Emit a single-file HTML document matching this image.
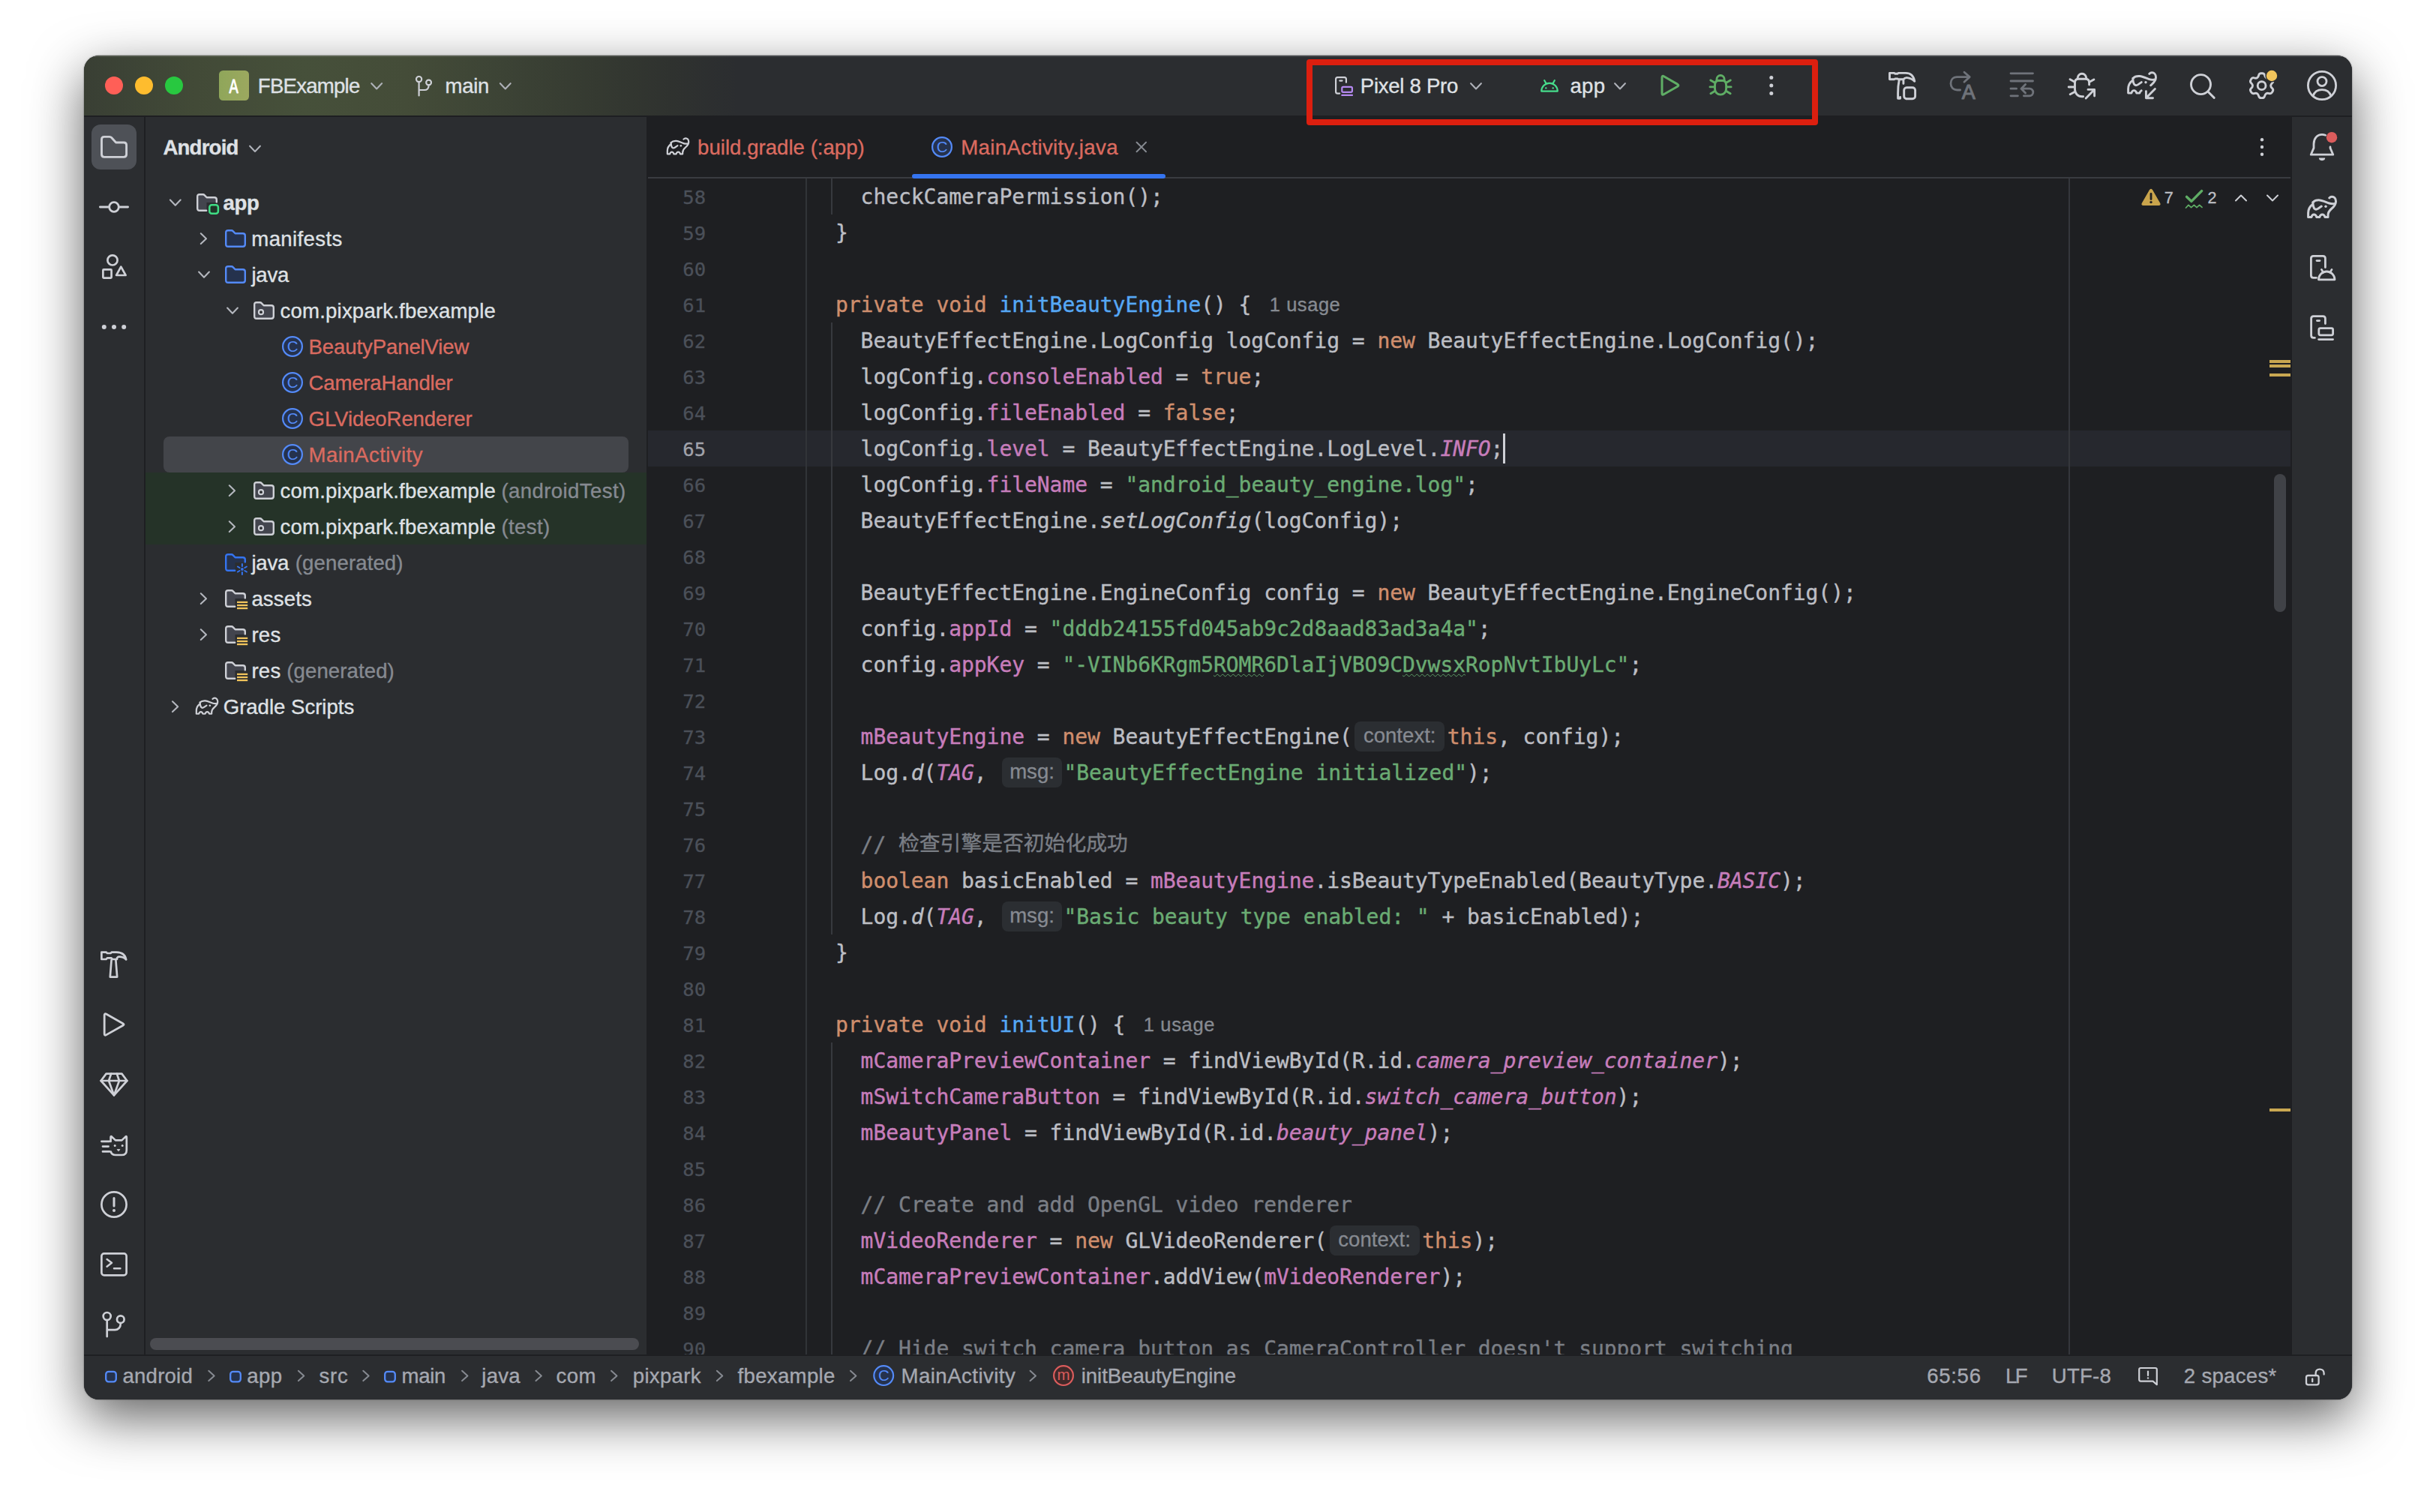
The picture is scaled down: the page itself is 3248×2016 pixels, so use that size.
<!DOCTYPE html>
<html lang="en"><head><meta charset="utf-8"><title>FBExample – MainActivity.java</title>
<style>
*{box-sizing:border-box}
html,body{margin:0;padding:0;background:#fff}
body{width:3248px;height:2016px;position:relative;overflow:hidden;font-family:'Liberation Sans', sans-serif}
.win{position:absolute;left:112px;top:74px;width:3024px;height:1792px;border-radius:20px;overflow:hidden;background:#2b2d30;
 box-shadow:0 24px 70px rgba(0,0,0,.62),0 0 2px rgba(0,0,0,.5)}
.pg{position:absolute;left:-112px;top:-74px;width:3248px;height:2016px}
.a{position:absolute}
.t{position:absolute;white-space:pre;-webkit-text-stroke:0.35px currentColor}
.title{left:112px;top:74px;width:3024px;height:80px;background:linear-gradient(to right,#393f34 0px,#3e4536 80px,#424a37 150px,#46503a 295px,#444c38 430px,#3c4335 560px,#353a31 680px,#2f322f 780px,#2b2d30 870px)}
.cl{position:absolute;left:1080.4px;height:48px;line-height:48px;white-space:pre;color:#bcbec4;font-family:'DejaVu Sans Mono', 'Liberation Mono', 'Noto Sans CJK SC', monospace;font-size:28px;letter-spacing:-0.058px;padding-top:1px;-webkit-text-stroke:0.4px currentColor}
.ln{position:absolute;left:880px;width:61px;text-align:right;height:48px;line-height:48px;color:#4b5059;font-family:'DejaVu Sans Mono', 'Liberation Mono', 'Noto Sans CJK SC', monospace;font-size:25.6px;letter-spacing:-0.05px;padding-top:1px;-webkit-text-stroke:0.3px currentColor}
.ln.cur{color:#a1a3ab}
.k{color:#cf8e6d}.f{color:#56a8f5}.p{color:#c77dbb}.s{color:#6aab73}.c{color:#7a7e85}.i{font-style:italic}
.cjk{font-family:'Liberation Mono','Noto Sans CJK SC',monospace;font-size:27.8px;letter-spacing:0;position:relative;top:-2.5px}
.w{text-decoration:underline wavy #5c9c66;text-decoration-thickness:1.4px;text-underline-offset:2px}
.hw{display:inline-block;position:relative;height:48px;vertical-align:top}
.hb{position:absolute;top:3px;height:40px;border-radius:8px;background:#2b2e32;color:#868a91;font-family:'Liberation Sans', sans-serif;font-size:27.6px;line-height:37.4px;text-align:center;letter-spacing:0;font-style:normal;-webkit-text-stroke:0.3px currentColor}
</style></head>
<body>
<div class="win"><div class="pg">
<div class="a title"></div>
<div class="a" style="left:112px;top:74px;width:3024px;height:1.5px;background:rgba(255,255,255,.1)"></div>
<!-- left stripe / project panel / right stripe backgrounds are window bg -->
<div class="a" style="left:112px;top:154px;width:3024px;height:2px;background:#1e1f22"></div>
<div class="a" style="left:192px;top:154px;width:2px;height:1652px;background:#1e1f22"></div>
<div class="a" style="left:122px;top:166px;width:60px;height:60px;border-radius:12px;background:#4e5157"></div>
<!-- tree backgrounds -->
<div class="a" style="left:194px;top:630px;width:668px;height:96px;background:#253328"></div>
<div class="a" style="left:218px;top:582px;width:620px;height:48px;border-radius:8px;background:#43454a"></div>
<div class="a" style="left:200px;top:1784px;width:652px;height:16px;border-radius:8px;background:#4b4c51"></div>
<!-- editor -->
<div class="a" style="left:862px;top:154px;width:2194px;height:1652px;background:#1e1f22"></div>
<div class="a" style="left:864px;top:574px;width:2190px;height:48px;background:#26282e"></div>
<div class="a" style="left:864px;top:236px;width:2190px;height:2px;background:#393b40"></div>
<div class="a" style="left:1216px;top:232px;width:338px;height:6px;border-radius:3px;background:#3574f0"></div>
<div class="a" style="left:1074.2px;top:238px;width:1.5px;height:1568px;background:#313438"></div>
<div class="a" style="left:2758px;top:238px;width:1.5px;height:1568px;background:#35373c"></div>
<div class="a" style="left:1108.3px;top:238px;width:1.5px;height:48px;background:#37393e"></div>
<div class="a" style="left:1108.3px;top:430px;width:1.5px;height:816px;background:#37393e"></div>
<div class="a" style="left:1108.3px;top:1390px;width:1.5px;height:416px;background:#37393e"></div>
<div class="a" style="left:3032px;top:632px;width:16px;height:184px;border-radius:8px;background:#404247"></div>
<div class="a" style="left:3026px;top:480px;width:28px;height:4px;background:#c9a751"></div>
<div class="a" style="left:3026px;top:486px;width:28px;height:4px;background:#c9a751"></div>
<div class="a" style="left:3026px;top:498px;width:28px;height:4px;background:#c9a751"></div>
<div class="a" style="left:3026px;top:1478px;width:28px;height:4px;background:#c9a751"></div>
<div class="a" style="left:2004px;top:578px;width:2.5px;height:40px;background:#ced0d6"></div>
<div class="a" id="code" style="left:0;top:0;width:3054px;height:1806px;overflow:hidden">
<div class="ln" style="top:238px">58</div><div class="ln" style="top:286px">59</div><div class="ln" style="top:334px">60</div><div class="ln" style="top:382px">61</div><div class="ln" style="top:430px">62</div><div class="ln" style="top:478px">63</div><div class="ln" style="top:526px">64</div><div class="ln cur" style="top:574px">65</div><div class="ln" style="top:622px">66</div><div class="ln" style="top:670px">67</div><div class="ln" style="top:718px">68</div><div class="ln" style="top:766px">69</div><div class="ln" style="top:814px">70</div><div class="ln" style="top:862px">71</div><div class="ln" style="top:910px">72</div><div class="ln" style="top:958px">73</div><div class="ln" style="top:1006px">74</div><div class="ln" style="top:1054px">75</div><div class="ln" style="top:1102px">76</div><div class="ln" style="top:1150px">77</div><div class="ln" style="top:1198px">78</div><div class="ln" style="top:1246px">79</div><div class="ln" style="top:1294px">80</div><div class="ln" style="top:1342px">81</div><div class="ln" style="top:1390px">82</div><div class="ln" style="top:1438px">83</div><div class="ln" style="top:1486px">84</div><div class="ln" style="top:1534px">85</div><div class="ln" style="top:1582px">86</div><div class="ln" style="top:1630px">87</div><div class="ln" style="top:1678px">88</div><div class="ln" style="top:1726px">89</div><div class="ln" style="top:1774px">90</div>
<div class="cl" style="top:238px">    checkCameraPermission();</div><div class="cl" style="top:286px">  }</div><div class="cl" style="top:334px"></div><div class="cl" style="top:382px">  <span class="k">private void</span> <span class="f">initBeautyEngine</span>() {</div><div class="cl" style="top:430px">    BeautyEffectEngine.LogConfig logConfig = <span class="k">new</span> BeautyEffectEngine.LogConfig();</div><div class="cl" style="top:478px">    logConfig.<span class="p">consoleEnabled</span> = <span class="k">true</span>;</div><div class="cl" style="top:526px">    logConfig.<span class="p">fileEnabled</span> = <span class="k">false</span>;</div><div class="cl" style="top:574px">    logConfig.<span class="p">level</span> = BeautyEffectEngine.LogLevel.<span class="p i">INFO</span>;</div><div class="cl" style="top:622px">    logConfig.<span class="p">fileName</span> = <span class="s">"android_beauty_engine.log"</span>;</div><div class="cl" style="top:670px">    BeautyEffectEngine.<span class="i">setLogConfig</span>(logConfig);</div><div class="cl" style="top:718px"></div><div class="cl" style="top:766px">    BeautyEffectEngine.EngineConfig config = <span class="k">new</span> BeautyEffectEngine.EngineConfig();</div><div class="cl" style="top:814px">    config.<span class="p">appId</span> = <span class="s">"dddb24155fd045ab9c2d8aad83ad3a4a"</span>;</div><div class="cl" style="top:862px">    config.<span class="p">appKey</span> = <span class="s">"-VINb6KRgm5<span class="w">ROMR</span>6DlaIjVBO9C<span class="w">Dvwsx</span>RopNvtIbUyLc"</span>;</div><div class="cl" style="top:910px"></div><div class="cl" style="top:958px">    <span class="p">mBeautyEngine</span> = <span class="k">new</span> BeautyEffectEngine(<span class="hw" style="width:127px"><span class="hb" style="left:3.4px;width:120px">context:</span></span><span class="k">this</span>, config);</div><div class="cl" style="top:1006px">    Log.<span class="i">d</span>(<span class="p i">TAG</span>, <span class="hw" style="width:86px"><span class="hb" style="left:3.6px;width:80px">msg:</span></span><span class="s">"BeautyEffectEngine initialized"</span>);</div><div class="cl" style="top:1054px"></div><div class="cl" style="top:1102px">    <span class="c">// </span><span class="c cjk">检查引擎是否初始化成功</span></div><div class="cl" style="top:1150px">    <span class="k">boolean</span> basicEnabled = <span class="p">mBeautyEngine</span>.isBeautyTypeEnabled(BeautyType.<span class="p i">BASIC</span>);</div><div class="cl" style="top:1198px">    Log.<span class="i">d</span>(<span class="p i">TAG</span>, <span class="hw" style="width:86px"><span class="hb" style="left:3.6px;width:80px">msg:</span></span><span class="s">"Basic beauty type enabled: "</span> + basicEnabled);</div><div class="cl" style="top:1246px">  }</div><div class="cl" style="top:1294px"></div><div class="cl" style="top:1342px">  <span class="k">private void</span> <span class="f">initUI</span>() {</div><div class="cl" style="top:1390px">    <span class="p">mCameraPreviewContainer</span> = findViewById(R.id.<span class="p i">camera_preview_container</span>);</div><div class="cl" style="top:1438px">    <span class="p">mSwitchCameraButton</span> = findViewById(R.id.<span class="p i">switch_camera_button</span>);</div><div class="cl" style="top:1486px">    <span class="p">mBeautyPanel</span> = findViewById(R.id.<span class="p i">beauty_panel</span>);</div><div class="cl" style="top:1534px"></div><div class="cl" style="top:1582px">    <span class="c">// Create and add OpenGL video renderer</span></div><div class="cl" style="top:1630px">    <span class="p">mVideoRenderer</span> = <span class="k">new</span> GLVideoRenderer(<span class="hw" style="width:127px"><span class="hb" style="left:3.4px;width:120px">context:</span></span><span class="k">this</span>);</div><div class="cl" style="top:1678px">    <span class="p">mCameraPreviewContainer</span>.addView(<span class="p">mVideoRenderer</span>);</div><div class="cl" style="top:1726px"></div><div class="cl" style="top:1774px">    <span class="c">// Hide switch camera button as CameraController doesn't support switching</span></div>
</div>
<!-- status bar -->
<div class="a" style="left:112px;top:1806px;width:3024px;height:60px;background:#2b2d30"></div>
<div class="a" style="left:112px;top:1806px;width:3024px;height:2px;background:#1e1f22"></div>
<div class="t" style="left:343.8px;top:97.9px;font-size:27.6px;line-height:33px;color:#dfe1e5;font-weight:normal;font-style:normal;letter-spacing:-0.766px">FBExample</div><div class="t" style="left:593.6px;top:97.9px;font-size:27.6px;line-height:33px;color:#dfe1e5;font-weight:normal;font-style:normal;letter-spacing:-0.371px">main</div><div class="t" style="left:1813.8px;top:97.9px;font-size:27.6px;line-height:33px;color:#dfe1e5;font-weight:normal;font-style:normal;letter-spacing:-0.294px">Pixel 8 Pro</div><div class="t" style="left:2093.5px;top:97.9px;font-size:27.6px;line-height:33px;color:#dfe1e5;font-weight:normal;font-style:normal;letter-spacing:0.277px">app</div><div class="t" style="left:217.4px;top:179.9px;font-size:27.6px;line-height:33px;color:#dfe1e5;font-weight:bold;font-style:normal;letter-spacing:-0.794px">Android</div><div class="t" style="left:297.5px;top:253.9px;font-size:27.6px;line-height:33px;color:#dfe1e5;font-weight:bold;font-style:normal;letter-spacing:-0.381px">app</div><div class="t" style="left:335.3px;top:301.9px;font-size:27.6px;line-height:33px;color:#dfe1e5;font-weight:normal;font-style:normal;letter-spacing:0.363px">manifests</div><div class="t" style="left:335.4px;top:349.9px;font-size:27.6px;line-height:33px;color:#dfe1e5;font-weight:normal;font-style:normal;letter-spacing:-0.208px">java</div><div class="t" style="left:373.6px;top:397.9px;font-size:27.6px;line-height:33px;color:#dfe1e5;font-weight:normal;font-style:normal;letter-spacing:0.173px">com.pixpark.fbexample</div><div class="t" style="left:411.6px;top:445.9px;font-size:27.6px;line-height:33px;color:#da6b60;font-weight:normal;font-style:normal;letter-spacing:-0.135px">BeautyPanelView</div><div class="t" style="left:411.6px;top:493.9px;font-size:27.6px;line-height:33px;color:#da6b60;font-weight:normal;font-style:normal;letter-spacing:-0.215px">CameraHandler</div><div class="t" style="left:411.6px;top:541.9px;font-size:27.6px;line-height:33px;color:#da6b60;font-weight:normal;font-style:normal;letter-spacing:-0.120px">GLVideoRenderer</div><div class="t" style="left:411.6px;top:589.9px;font-size:27.6px;line-height:33px;color:#da6b60;font-weight:normal;font-style:normal;letter-spacing:0.427px">MainActivity</div><div class="t" style="left:373.6px;top:637.9px;font-size:27.6px;line-height:33px;color:#dfe1e5;font-weight:normal;font-style:normal;letter-spacing:0.173px">com.pixpark.fbexample</div><div class="t" style="left:668.4px;top:637.9px;font-size:27.6px;line-height:33px;color:#868a91;font-weight:normal;font-style:normal;letter-spacing:0.404px">(androidTest)</div><div class="t" style="left:373.6px;top:685.9px;font-size:27.6px;line-height:33px;color:#dfe1e5;font-weight:normal;font-style:normal;letter-spacing:0.173px">com.pixpark.fbexample</div><div class="t" style="left:668.4px;top:685.9px;font-size:27.6px;line-height:33px;color:#868a91;font-weight:normal;font-style:normal;letter-spacing:0.388px">(test)</div><div class="t" style="left:335.4px;top:733.9px;font-size:27.6px;line-height:33px;color:#dfe1e5;font-weight:normal;font-style:normal;letter-spacing:-0.208px">java</div><div class="t" style="left:393.8px;top:733.9px;font-size:27.6px;line-height:33px;color:#868a91;font-weight:normal;font-style:normal;letter-spacing:0.103px">(generated)</div><div class="t" style="left:335.4px;top:781.9px;font-size:27.6px;line-height:33px;color:#dfe1e5;font-weight:normal;font-style:normal;letter-spacing:0.130px">assets</div><div class="t" style="left:335.4px;top:829.9px;font-size:27.6px;line-height:33px;color:#dfe1e5;font-weight:normal;font-style:normal;letter-spacing:0.228px">res</div><div class="t" style="left:335.4px;top:877.9px;font-size:27.6px;line-height:33px;color:#dfe1e5;font-weight:normal;font-style:normal;letter-spacing:0.228px">res</div><div class="t" style="left:382.3px;top:877.9px;font-size:27.6px;line-height:33px;color:#868a91;font-weight:normal;font-style:normal;letter-spacing:0.083px">(generated)</div><div class="t" style="left:297.7px;top:925.9px;font-size:27.6px;line-height:33px;color:#dfe1e5;font-weight:normal;font-style:normal;letter-spacing:-0.025px">Gradle Scripts</div><div class="t" style="left:930.1px;top:179.9px;font-size:27.6px;line-height:33px;color:#da6b60;font-weight:normal;font-style:normal;letter-spacing:0.015px">build.gradle (:app)</div><div class="t" style="left:1281.2px;top:179.9px;font-size:27.6px;line-height:33px;color:#da6b60;font-weight:normal;font-style:normal;letter-spacing:0.366px">MainActivity.java</div><div class="t" style="left:163.5px;top:1817.9px;font-size:27.6px;line-height:33px;color:#a5a8b0;font-weight:normal;font-style:normal;letter-spacing:0.206px">android</div><div class="t" style="left:329.3px;top:1817.9px;font-size:27.6px;line-height:33px;color:#a5a8b0;font-weight:normal;font-style:normal;letter-spacing:0.327px">app</div><div class="t" style="left:425.6px;top:1817.9px;font-size:27.6px;line-height:33px;color:#a5a8b0;font-weight:normal;font-style:normal;letter-spacing:0.702px">src</div><div class="t" style="left:535.6px;top:1817.9px;font-size:27.6px;line-height:33px;color:#a5a8b0;font-weight:normal;font-style:normal;letter-spacing:-0.337px">main</div><div class="t" style="left:642.3px;top:1817.9px;font-size:27.6px;line-height:33px;color:#a5a8b0;font-weight:normal;font-style:normal;letter-spacing:0.225px">java</div><div class="t" style="left:741.5px;top:1817.9px;font-size:27.6px;line-height:33px;color:#a5a8b0;font-weight:normal;font-style:normal;letter-spacing:0.380px">com</div><div class="t" style="left:843.8px;top:1817.9px;font-size:27.6px;line-height:33px;color:#a5a8b0;font-weight:normal;font-style:normal;letter-spacing:0.291px">pixpark</div><div class="t" style="left:983.5px;top:1817.9px;font-size:27.6px;line-height:33px;color:#a5a8b0;font-weight:normal;font-style:normal;letter-spacing:0.323px">fbexample</div><div class="t" style="left:1201.5px;top:1817.9px;font-size:27.6px;line-height:33px;color:#a5a8b0;font-weight:normal;font-style:normal;letter-spacing:0.463px">MainActivity</div><div class="t" style="left:1441.7px;top:1817.9px;font-size:27.6px;line-height:33px;color:#a5a8b0;font-weight:normal;font-style:normal;letter-spacing:-0.054px">initBeautyEngine</div><div class="t" style="left:2569.2px;top:1817.9px;font-size:27.6px;line-height:33px;color:#a5a8b0;font-weight:normal;font-style:normal;letter-spacing:0.684px">65:56</div><div class="t" style="left:2674.1px;top:1817.9px;font-size:27.6px;line-height:33px;color:#a5a8b0;font-weight:normal;font-style:normal;letter-spacing:-2.603px">LF</div><div class="t" style="left:2735.8px;top:1817.9px;font-size:27.6px;line-height:33px;color:#a5a8b0;font-weight:normal;font-style:normal;letter-spacing:0.203px">UTF-8</div><div class="t" style="left:2911.8px;top:1817.9px;font-size:27.6px;line-height:33px;color:#a5a8b0;font-weight:normal;font-style:normal;letter-spacing:0.289px">2 spaces*</div><div class="t" style="left:2885.8px;top:250.7px;font-size:21.6px;line-height:26px;color:#bcbec4;font-weight:normal;font-style:normal;letter-spacing:0.000px">7</div><div class="t" style="left:2943.6px;top:250.7px;font-size:21.6px;line-height:26px;color:#bcbec4;font-weight:normal;font-style:normal;letter-spacing:0.000px">2</div><div class="t" style="left:1692.8px;top:390.7px;font-size:25.5px;line-height:31px;color:#868a91;font-weight:normal;font-style:normal;letter-spacing:0.542px">1 usage</div><div class="t" style="left:1524.8px;top:1350.7px;font-size:25.5px;line-height:31px;color:#868a91;font-weight:normal;font-style:normal;letter-spacing:0.642px">1 usage</div>
<svg class="a" style="left:0;top:0" width="3248" height="2016" viewBox="0 0 3248 2016" fill="none" stroke-linecap="round" stroke-linejoin="round">
<circle cx="152" cy="114" r="12" fill="#ff5f57"/><circle cx="192" cy="114" r="12" fill="#febc2e"/><circle cx="232" cy="114" r="12" fill="#28c840"/>
<defs><linearGradient id="pg" x1="0" y1="0" x2="1" y2="0"><stop offset="0" stop-color="#8fa65a"/><stop offset="1" stop-color="#9ca85f"/></linearGradient></defs><rect x="292" y="94" width="40" height="40" rx="5.5" fill="url(#pg)"/>
<text transform="translate(311.7 123.7) scale(0.74 1)" x="0" y="0" font-family="Liberation Mono, monospace" font-size="27.6" fill="#fff" text-anchor="middle" stroke="#fff" stroke-width="0.8">A</text>
<path d="M495.3 111.2 L502.2 118.39999999999999 L509.09999999999997 111.2" stroke="#aeb1b8" stroke-width="2.1"/>
<path d="M666.9 111.2 L673.8 118.39999999999999 L680.6999999999999 111.2" stroke="#aeb1b8" stroke-width="2.1"/>
<path d="M1961.1 111.2 L1968 118.39999999999999 L1974.9 111.2" stroke="#aeb1b8" stroke-width="2.1"/>
<path d="M2153.1 111.2 L2160 118.39999999999999 L2166.9 111.2" stroke="#aeb1b8" stroke-width="2.1"/>
<path d="M333.1 194.70000000000002 L340 201.9 L346.9 194.70000000000002" stroke="#aeb1b8" stroke-width="2.1"/>
<path d="M226.9 266.59999999999997 L233.8 273.8 L240.70000000000002 266.59999999999997" stroke="#b4b7be" stroke-width="2.1"/>
<path d="M265.1 362.59999999999997 L272 369.8 L278.9 362.59999999999997" stroke="#b4b7be" stroke-width="2.1"/>
<path d="M303.1 410.59999999999997 L310 417.8 L316.9 410.59999999999997" stroke="#b4b7be" stroke-width="2.1"/>
<path d="M267.79999999999995 311.3 L275.0 318.2 L267.79999999999995 325.09999999999997" stroke="#b4b7be" stroke-width="2.1"/>
<path d="M305.79999999999995 647.3000000000001 L313.0 654.2 L305.79999999999995 661.1" stroke="#b4b7be" stroke-width="2.1"/>
<path d="M305.79999999999995 695.3000000000001 L313.0 702.2 L305.79999999999995 709.1" stroke="#b4b7be" stroke-width="2.1"/>
<path d="M267.79999999999995 791.3000000000001 L275.0 798.2 L267.79999999999995 805.1" stroke="#b4b7be" stroke-width="2.1"/>
<path d="M267.79999999999995 839.3000000000001 L275.0 846.2 L267.79999999999995 853.1" stroke="#b4b7be" stroke-width="2.1"/>
<path d="M230.0 935.3000000000001 L237.2 942.2 L230.0 949.1" stroke="#b4b7be" stroke-width="2.1"/>
<path d="M278.3 1827.7 L285.7 1834.4 L278.3 1841.1000000000001" stroke="#868a91" stroke-width="2"/>
<path d="M397.90000000000003 1827.7 L405.3 1834.4 L397.90000000000003 1841.1000000000001" stroke="#868a91" stroke-width="2"/>
<path d="M484.3 1827.7 L491.7 1834.4 L484.3 1841.1000000000001" stroke="#868a91" stroke-width="2"/>
<path d="M616.0999999999999 1827.7 L623.5 1834.4 L616.0999999999999 1841.1000000000001" stroke="#868a91" stroke-width="2"/>
<path d="M714.5 1827.7 L721.9000000000001 1834.4 L714.5 1841.1000000000001" stroke="#868a91" stroke-width="2"/>
<path d="M815.0999999999999 1827.7 L822.5 1834.4 L815.0999999999999 1841.1000000000001" stroke="#868a91" stroke-width="2"/>
<path d="M955.9 1827.7 L963.3000000000001 1834.4 L955.9 1841.1000000000001" stroke="#868a91" stroke-width="2"/>
<path d="M1134.0 1827.7 L1141.4 1834.4 L1134.0 1841.1000000000001" stroke="#868a91" stroke-width="2"/>
<path d="M1373.6 1827.7 L1381.0 1834.4 L1373.6 1841.1000000000001" stroke="#868a91" stroke-width="2"/>
<g transform="translate(554 101) scale(1.0)" stroke="#ced0d6" stroke-width="2.2"><circle cx="4.6" cy="4.6" r="3.6"/><circle cx="17.6" cy="9" r="3.4"/><path d="M4.6 8.4 V26.5 M17.6 12.6 V13.2 C17.6 16.6 15.4 19 12 19 H4.6"/></g>
<g transform="translate(136.3 1748.5) scale(1)" stroke="#ced0d6" stroke-width="2.7"><circle cx="6.4" cy="6.5" r="5"/><circle cx="24.5" cy="10.7" r="4.8"/><path d="M6.4 11.6 V33.6 M24.5 15.6 V16.5 C24.5 21 21.5 24.6 17 24.6 H6.4"/></g>
<g stroke="#ced0d6" stroke-width="2.2"><path d="M1786.2 124.6 H1783.5 Q1781.1 124.6 1781.1 122.2 V105.5 Q1781.1 103.1 1783.5 103.1 H1792.5 Q1794.9 103.1 1794.9 105.5 V109.8"/><path d="M1786.3 107.6 H1789.6"/></g>
<g stroke="#b589f0" stroke-width="2.2"><rect x="1789.3" y="115.8" width="13.6" height="7" rx="1.6"/><path d="M1789.3 126.9 H1803"/></g>
<g transform="translate(2054 106.2) scale(1.0)" stroke="#47dd8c" stroke-width="2.2"><path d="M1.2 15.4 A10.8 10.8 0 0 1 22.8 15.4 Z"/><path d="M5.2 1 L7.8 5.6 M18.8 1 L16.2 5.6"/><circle cx="7.3" cy="11.2" r="1.2" fill="#47dd8c" stroke="none"/><circle cx="16.7" cy="11.2" r="1.2" fill="#47dd8c" stroke="none"/></g>
<path d="M2216 103.2 Q2216 100.4 2218.4 101.8 L2236.8 112.4 Q2239 113.8 2236.8 115.2 L2218.4 125.8 Q2216 127.2 2216 124.4 Z" stroke="#5fad65" stroke-width="3"/>
<g stroke="#5fad65" stroke-width="2.9"><path d="M2286.5 114 C2286.5 109.6 2288.6 107.5 2291.2 107.5 H2296.9 C2299.5 107.5 2301.6 109.6 2301.6 114 V118.6 A7.55 7.55 0 0 1 2286.5 118.6 Z"/><path d="M2289 107.2 V105.6 A5.05 5.05 0 0 1 2299.1 105.6 V107.2"/><path d="M2280.8 107 L2286 110 M2280 115.9 H2285.4 M2281 124.8 L2286.4 121.4 M2307.3 107 L2302.1 110 M2308.1 115.9 H2302.7 M2307.1 124.8 L2301.7 121.4"/></g>
<circle cx="2361.8" cy="103.5" r="2.5" fill="#ced0d6"/><circle cx="2361.8" cy="114" r="2.5" fill="#ced0d6"/><circle cx="2361.8" cy="124.5" r="2.5" fill="#ced0d6"/>
<circle cx="3016" cy="186.2" r="2.2" fill="#ced0d6"/><circle cx="3016" cy="196" r="2.2" fill="#ced0d6"/><circle cx="3016" cy="205.8" r="2.2" fill="#ced0d6"/>
<g transform="translate(0 0.4)" stroke="#ced0d6" stroke-width="2.9"><path d="M2519.5 97 H2525.6 L2526.8 97.8 H2530 L2531.2 97 H2541 C2547.5 97 2551.6 101.4 2552.8 108 C2549.6 105 2546 103.4 2542.6 103.2 C2540.4 103.1 2539 104 2537.9 105.3 H2531.2 L2530 104.6 H2526.8 L2525.6 105.3 H2519.5 Z"/><path d="M2532.2 106.4 C2531 112 2530.6 118 2530.6 124 V130.8 H2533.6 V129 M2537.9 106.4 V111.2"/><rect x="2538.7" y="116.3" width="14.9" height="15.1" rx="3.6"/></g>
<g stroke="#6f737a" stroke-width="2.8"><path d="M2613.6 120 H2609.5 C2604 120 2601 116 2601 111.3 C2601 106.5 2604 102.6 2609.5 102.6 H2625.6"/><path d="M2619 96.2 L2626.2 102.6 L2619 109.2"/></g>
<text x="2624.8" y="131.8" font-family="Liberation Sans, sans-serif" font-size="27" fill="#6f737a" stroke="#6f737a" stroke-width="1.1" text-anchor="middle">A</text>
<g stroke="#6f737a" stroke-width="2.8"><path d="M2681 97.8 H2710.5 M2681 108 H2710.5 M2681 118.2 H2688.6 M2681 127.8 H2690.4"/><path d="M2700.6 112.6 L2695 118.2 L2700.6 124 M2695.6 118.2 H2706 A4.8 4.8 0 0 1 2706 127.8 H2698.4"/></g>
<g stroke="#ced0d6" stroke-width="2.9"><path d="M2770.2 105.3 V104 A5.75 5.8 0 0 1 2781.7 104 V105.3"/><path d="M2785.6 113 V110.4 C2785.6 107.4 2784 105.3 2781 105.3 H2771 C2768 105.3 2766.5 107.4 2766.5 110.4 V119 C2766.5 124.6 2770.6 128.7 2776 128.7 H2777.6"/><path d="M2760 105.8 L2765.8 109 M2758.2 116 H2764.8 M2760.2 125.8 L2765.8 122.8 M2791.9 105.9 L2786 109.2"/><path d="M2781.2 130.9 L2792.4 119.6 M2784 119.4 H2792.6 V128.1"/></g>
<g transform="translate(2826 84.6) scale(1.0)" stroke="#ced0d6" stroke-width="2.9"><path d="M17.5 22.5 C13.5 25.5 11.6 29.5 11.6 34 V39.5 H15.9 C16.5 37.3 17.8 36 19.3 36 C20.8 36 22.2 37.3 22.8 39.5 H26.8 C27.2 38 28 36.8 29.2 36.2"/><path d="M39.7 13.9 C40.5 13 41.8 12.2 43.3 12.2 C46 12.2 48.5 14.5 48.5 18.5 C48.5 22.5 46 25.5 43 28 L41.6 29.2"/><path d="M47.4 34 L35.8 45.7 M35.4 37 V46.1 H44.5"/><path d="M17.9 19.8 C20 17.5 24 16.7 27 16.9 C31 17.2 35 19.5 39.5 21 C42 21.8 45 21.9 47.6 21.4"/><path d="M17.9 19.8 C17.9 23 18.5 26.5 20 28.2 C21.5 29.8 23.5 29 25 28 L29.3 25"/><circle cx="35" cy="25.2" r="1.7" fill="#ced0d6" stroke="none"/></g>
<g transform="translate(3066 250) scale(1.0)" stroke="#ced0d6" stroke-width="3.0"><path d="M17.5 22.5 C13.5 25.5 11.6 29.5 11.6 34 V39.5 H15.9 C16.5 37.3 17.8 36 19.3 36 C20.8 36 22.2 37.3 22.8 39.5 H26.8 C27.4 37.3 28.8 36 30.4 36 C32 36 33.4 37.3 34 39.5 H38 V37 C38 33 40 30.5 43 28 C46 25.5 48.5 22.5 48.5 18.5 C48.5 14.5 46 12.2 43.3 12.2 C41.8 12.2 40.5 13 39.7 13.9"/><path d="M17.9 19.8 C20 17.5 24 16.7 27 16.9 C31 17.2 35 19.5 39.5 21 C42 21.8 45 21.9 47.6 21.4"/><path d="M17.9 19.8 C17.9 23 18.5 26.5 20 28.2 C21.5 29.8 23.5 29 25 28 L29.3 25"/><circle cx="35" cy="25.2" r="1.7" fill="#ced0d6" stroke="none"/></g>
<g transform="translate(880.9 174.93) scale(0.77)" stroke="#ced0d6" stroke-width="2.9"><path d="M17.5 22.5 C13.5 25.5 11.6 29.5 11.6 34 V39.5 H15.9 C16.5 37.3 17.8 36 19.3 36 C20.8 36 22.2 37.3 22.8 39.5 H26.8 C27.4 37.3 28.8 36 30.4 36 C32 36 33.4 37.3 34 39.5 H38 V37 C38 33 40 30.5 43 28 C46 25.5 48.5 22.5 48.5 18.5 C48.5 14.5 46 12.2 43.3 12.2 C41.8 12.2 40.5 13 39.7 13.9"/><path d="M17.9 19.8 C20 17.5 24 16.7 27 16.9 C31 17.2 35 19.5 39.5 21 C42 21.8 45 21.9 47.6 21.4"/><path d="M17.9 19.8 C17.9 23 18.5 26.5 20 28.2 C21.5 29.8 23.5 29 25 28 L29.3 25"/><circle cx="35" cy="25.2" r="1.7" fill="#ced0d6" stroke="none"/></g>
<g transform="translate(252.90000000000003 921.3299999999999) scale(0.77)" stroke="#ced0d6" stroke-width="2.9"><path d="M17.5 22.5 C13.5 25.5 11.6 29.5 11.6 34 V39.5 H15.9 C16.5 37.3 17.8 36 19.3 36 C20.8 36 22.2 37.3 22.8 39.5 H26.8 C27.4 37.3 28.8 36 30.4 36 C32 36 33.4 37.3 34 39.5 H38 V37 C38 33 40 30.5 43 28 C46 25.5 48.5 22.5 48.5 18.5 C48.5 14.5 46 12.2 43.3 12.2 C41.8 12.2 40.5 13 39.7 13.9"/><path d="M17.9 19.8 C20 17.5 24 16.7 27 16.9 C31 17.2 35 19.5 39.5 21 C42 21.8 45 21.9 47.6 21.4"/><path d="M17.9 19.8 C17.9 23 18.5 26.5 20 28.2 C21.5 29.8 23.5 29 25 28 L29.3 25"/><circle cx="35" cy="25.2" r="1.7" fill="#ced0d6" stroke="none"/></g>
<g stroke="#ced0d6" stroke-width="2.9"><circle cx="2934.5" cy="112.6" r="13"/><path d="M2944 122.2 L2952.2 130.4"/></g>
<g stroke="#ced0d6" stroke-width="2.9"><path d="M3009.56 103.74 Q3011.03 102.89 3011.63 100.36 L3011.65 100.27 Q3012.25 97.74 3014.85 97.74 L3016.35 97.74 Q3018.95 97.74 3019.55 100.27 L3019.57 100.36 Q3020.17 102.89 3021.64 103.74 L3021.64 103.74 Q3023.11 104.59 3025.60 103.84 L3025.69 103.81 Q3028.18 103.07 3029.48 105.32 L3030.23 106.62 Q3031.53 108.87 3029.64 110.65 L3029.57 110.72 Q3027.68 112.50 3027.68 114.20 L3027.68 114.20 Q3027.68 115.90 3029.57 117.68 L3029.64 117.75 Q3031.53 119.53 3030.23 121.78 L3029.48 123.08 Q3028.18 125.33 3025.69 124.59 L3025.60 124.56 Q3023.11 123.81 3021.64 124.66 L3021.64 124.66 Q3020.17 125.51 3019.57 128.04 L3019.55 128.13 Q3018.95 130.66 3016.35 130.66 L3014.85 130.66 Q3012.25 130.66 3011.65 128.13 L3011.63 128.04 Q3011.03 125.51 3009.56 124.66 L3009.56 124.66 Q3008.09 123.81 3005.60 124.56 L3005.51 124.59 Q3003.02 125.33 3001.72 123.08 L3000.97 121.78 Q2999.67 119.53 3001.56 117.75 L3001.63 117.68 Q3003.52 115.90 3003.52 114.20 L3003.52 114.20 Q3003.52 112.50 3001.63 110.72 L3001.56 110.65 Q2999.67 108.87 3000.97 106.62 L3001.72 105.32 Q3003.02 103.07 3005.51 103.81 L3005.60 103.84 Q3008.09 104.59 3009.56 103.74 Z"/><circle cx="3015.6" cy="114.2" r="5.4"/></g>
<circle cx="3029" cy="101" r="8.6" fill="#2b2d30"/><circle cx="3029" cy="101" r="7.2" fill="#f2c55c"/>
<g stroke="#ced0d6" stroke-width="2.8"><circle cx="3096" cy="114" r="18.6"/><circle cx="3096" cy="108.6" r="6"/><path d="M3084 128 C3086 122 3090.5 119.6 3096 119.6 C3101.5 119.6 3106 122 3108 128"/></g>
<path d="M135.5 186 Q135.5 182.4 139 182.4 H146 Q147.6 182.4 148.7 183.6 L154.6 190 H165 Q168.6 190 168.6 193.6 V205.8 Q168.6 209.4 165 209.4 H139 Q135.5 209.4 135.5 205.8 Z" stroke="#ced0d6" stroke-width="2.9"/>
<g stroke="#ced0d6" stroke-width="2.8"><path d="M133.4 276 H144.6 M159.4 276 H170.6"/><circle cx="152" cy="276" r="6.3"/></g>
<g stroke="#ced0d6" stroke-width="2.7"><circle cx="150" cy="346.9" r="6.6"/><rect x="137.4" y="359.4" width="11.2" height="11.2" rx="0.8"/><path d="M161.3 355.6 L167.6 367 H155.1 Z"/></g>
<circle cx="138.8" cy="436" r="3" fill="#ced0d6"/><circle cx="152" cy="436" r="3" fill="#ced0d6"/><circle cx="165.2" cy="436" r="3" fill="#ced0d6"/>
<g stroke="#ced0d6" stroke-width="2.7"><path d="M135.4 1269.6 H141.5 L143 1271 H147.5 L149 1269.6 H155 C163 1269.6 167 1273.4 168.2 1279.4 C164.6 1276 161 1275.4 157.4 1275.8 L156 1277.4 V1279 H150 L148.5 1277.4 H143 L141.5 1279 H135.4 Z"/><path d="M148.6 1280 L146.8 1302.6 H156.2 L154.4 1280"/></g>
<path d="M139.2 1353.6 Q139.2 1350.8 141.6 1352.1 L164 1364.7 Q166.2 1366 164 1367.3 L141.6 1379.9 Q139.2 1381.2 139.2 1378.4 Z" stroke="#ced0d6" stroke-width="2.8"/>
<g stroke="#ced0d6" stroke-width="2.7"><path d="M141.6 1431.6 H162.4 L169.4 1441 L152 1460.4 L134.6 1441 Z"/><path d="M134.6 1441 H169.4 M148.2 1431.6 L145 1441 L152 1460.4 L159 1441 L155.8 1431.6"/></g>
<g stroke="#ced0d6" stroke-width="2.7"><path d="M147.6 1522 V1516.2 Q147.6 1514.4 149 1515.6 L154 1520.4 H162.4 L167.4 1515.6 Q168.8 1514.4 168.8 1516.2 V1533.4 Q168.8 1540 162.2 1540 H154.2 Q148.8 1540 147.8 1535.6"/><path d="M135.4 1521.8 H146 M137 1528.6 H144.6 M137 1535.4 H146"/><circle cx="153.2" cy="1527.6" r="1.5" fill="#ced0d6" stroke="none"/><circle cx="163.2" cy="1527.6" r="1.5" fill="#ced0d6" stroke="none"/><path d="M156.6 1532.6 H159.8 L158.2 1534.6 Z" fill="#ced0d6" stroke-width="1"/></g>
<g stroke="#ced0d6" stroke-width="2.7"><circle cx="152" cy="1606" r="16.6"/><path d="M152 1597.4 V1608" stroke-width="3"/><circle cx="152" cy="1614" r="2" fill="#ced0d6" stroke="none"/></g>
<g stroke="#ced0d6" stroke-width="2.7"><rect x="135.4" y="1671.4" width="33.2" height="29" rx="3.4"/><path d="M142.6 1679 L149 1683.8 L142.6 1688.8 M152 1691.2 H160.4" stroke-width="2.5"/></g>
<g stroke="#ced0d6" stroke-width="2.8"><path d="M3100.6 180.2 C3099.2 179.7 3097.6 179.4 3096 179.4 C3089.6 179.4 3085 184.6 3085 192 V197.4 L3081.2 206.2 H3110.8 L3107 197.4 V196"/><path d="M3091.8 210.6 H3100.2 A4.2 3.6 0 0 1 3091.8 210.6 Z" fill="#ced0d6" stroke="none"/></g>
<circle cx="3109" cy="183.2" r="7.2" fill="#db5c5c"/>
<g stroke="#ced0d6" stroke-width="2.8"><path d="M3088.4 370.4 H3084.6 Q3081.4 370.4 3081.4 367.2 V344.6 Q3081.4 341.4 3084.6 341.4 H3097.2 Q3100.4 341.4 3100.4 344.6 V356.6"/><path d="M3089 347.6 H3093"/><path d="M3091.4 372.8 A10.8 10.8 0 0 1 3113 372.8 Z"/><path d="M3095.4 359.4 L3097.8 363.4 M3109 359.4 L3106.6 363.4"/></g>
<g stroke="#ced0d6" stroke-width="2.8"><path d="M3086.4 450.4 H3084.8 Q3081.6 450.4 3081.6 447.2 V424.8 Q3081.6 421.6 3084.8 421.6 H3097.2 Q3100.4 421.6 3100.4 424.8 V431.6"/><path d="M3089.4 427.6 H3092.6"/><rect x="3091.8" y="437.6" width="18.8" height="9.2" rx="2"/><path d="M3091.6 452.6 H3110.6"/></g>
<circle cx="390" cy="462" r="12.9" fill="#25324d" stroke="#548af7" stroke-width="2.2"/><text x="390.1" y="469.3" font-family="Liberation Sans, sans-serif" font-size="20.5" fill="#548af7" stroke="none" text-anchor="middle">C</text>
<circle cx="390" cy="510" r="12.9" fill="#25324d" stroke="#548af7" stroke-width="2.2"/><text x="390.1" y="517.3" font-family="Liberation Sans, sans-serif" font-size="20.5" fill="#548af7" stroke="none" text-anchor="middle">C</text>
<circle cx="390" cy="558" r="12.9" fill="#25324d" stroke="#548af7" stroke-width="2.2"/><text x="390.1" y="565.3" font-family="Liberation Sans, sans-serif" font-size="20.5" fill="#548af7" stroke="none" text-anchor="middle">C</text>
<circle cx="390" cy="606" r="12.9" fill="#25324d" stroke="#548af7" stroke-width="2.2"/><text x="390.1" y="613.3" font-family="Liberation Sans, sans-serif" font-size="20.5" fill="#548af7" stroke="none" text-anchor="middle">C</text>
<circle cx="1256" cy="196" r="12.9" fill="#25324d" stroke="#548af7" stroke-width="2.2"/><text x="1256.1" y="203.3" font-family="Liberation Sans, sans-serif" font-size="20.5" fill="#548af7" stroke="none" text-anchor="middle">C</text>
<circle cx="1178.2" cy="1834.1" r="12.9" fill="#25324d" stroke="#548af7" stroke-width="2.2"/><text x="1178.3" y="1841.3999999999999" font-family="Liberation Sans, sans-serif" font-size="20.5" fill="#548af7" stroke="none" text-anchor="middle">C</text>
<circle cx="1418" cy="1834.1" r="12.9" fill="#402929" stroke="#db5c5c" stroke-width="2.2"/><text x="1418" y="1840.2" font-family="Liberation Sans, sans-serif" font-size="20.5" fill="#db5c5c" stroke="none" text-anchor="middle">m</text>
<rect x="141.2" y="1828.8" width="13.6" height="13.6" rx="3.6" fill="#25324d" stroke="#548af7" stroke-width="2.3"/>
<rect x="307.2" y="1828.8" width="13.6" height="13.6" rx="3.6" fill="#25324d" stroke="#548af7" stroke-width="2.3"/>
<rect x="513.2" y="1828.8" width="13.6" height="13.6" rx="3.6" fill="#25324d" stroke="#548af7" stroke-width="2.3"/>
<g transform="translate(262 258) scale(1)" stroke="#ced0d6" stroke-width="2.4"><path d="M1.2 4.2 Q1.2 1.2 4.2 1.2 H8.6 Q9.8 1.2 10.6 2.1 L13.6 5.3 H23.8 Q26.8 5.3 26.8 8.3 V12 H13.5 V22.8 H4.2 Q1.2 22.8 1.2 19.8 Z" fill="#43454e" stroke="none"/><path d="M13.2 22.8 H4.2 Q1.2 22.8 1.2 19.8 V4.2 Q1.2 1.2 4.2 1.2 H8.6 Q9.8 1.2 10.6 2.1 L13.6 5.3 H23.8 Q26.8 5.3 26.8 8.3 V11.4"/></g>
<rect x="279.3" y="273.2" width="11.6" height="11.6" rx="3" fill="#1f3528" stroke="#3fdc84" stroke-width="2.5"/>
<g transform="translate(300 306) scale(1)" stroke="#548af7" stroke-width="2.4"><path d="M1.2 4.2 Q1.2 1.2 4.2 1.2 H8.6 Q9.8 1.2 10.6 2.1 L13.6 5.3 H23.8 Q26.8 5.3 26.8 8.3 V19.8 Q26.8 22.8 23.8 22.8 H4.2 Q1.2 22.8 1.2 19.8 Z" fill="#25324d"/></g>
<g transform="translate(300 354) scale(1)" stroke="#548af7" stroke-width="2.4"><path d="M1.2 4.2 Q1.2 1.2 4.2 1.2 H8.6 Q9.8 1.2 10.6 2.1 L13.6 5.3 H23.8 Q26.8 5.3 26.8 8.3 V19.8 Q26.8 22.8 23.8 22.8 H4.2 Q1.2 22.8 1.2 19.8 Z" fill="#25324d"/></g>
<g transform="translate(338 402) scale(1)" stroke="#ced0d6" stroke-width="2.4"><path d="M1.2 4.2 Q1.2 1.2 4.2 1.2 H8.6 Q9.8 1.2 10.6 2.1 L13.6 5.3 H23.8 Q26.8 5.3 26.8 8.3 V19.8 Q26.8 22.8 23.8 22.8 H4.2 Q1.2 22.8 1.2 19.8 Z" fill="#43454e"/></g><circle cx="348" cy="416.2" r="3" fill="#2b2d30" stroke="#ced0d6" stroke-width="2.2"/>
<g transform="translate(338 642) scale(1)" stroke="#ced0d6" stroke-width="2.4"><path d="M1.2 4.2 Q1.2 1.2 4.2 1.2 H8.6 Q9.8 1.2 10.6 2.1 L13.6 5.3 H23.8 Q26.8 5.3 26.8 8.3 V19.8 Q26.8 22.8 23.8 22.8 H4.2 Q1.2 22.8 1.2 19.8 Z" fill="#43454e"/></g><circle cx="348" cy="656.2" r="3" fill="#2b2d30" stroke="#ced0d6" stroke-width="2.2"/>
<g transform="translate(338 690) scale(1)" stroke="#ced0d6" stroke-width="2.4"><path d="M1.2 4.2 Q1.2 1.2 4.2 1.2 H8.6 Q9.8 1.2 10.6 2.1 L13.6 5.3 H23.8 Q26.8 5.3 26.8 8.3 V19.8 Q26.8 22.8 23.8 22.8 H4.2 Q1.2 22.8 1.2 19.8 Z" fill="#43454e"/></g><circle cx="348" cy="704.2" r="3" fill="#2b2d30" stroke="#ced0d6" stroke-width="2.2"/>
<g transform="translate(300 738) scale(1)" stroke="#3574f0" stroke-width="2.4"><path d="M1.2 4.2 Q1.2 1.2 4.2 1.2 H8.6 Q9.8 1.2 10.6 2.1 L13.6 5.3 H23.8 Q26.8 5.3 26.8 8.3 V12 H13.5 V22.8 H4.2 Q1.2 22.8 1.2 19.8 Z" fill="#25324d" stroke="none"/><path d="M13.2 22.8 H4.2 Q1.2 22.8 1.2 19.8 V4.2 Q1.2 1.2 4.2 1.2 H8.6 Q9.8 1.2 10.6 2.1 L13.6 5.3 H23.8 Q26.8 5.3 26.8 8.3 V11.4"/></g>
<g stroke="#3574f0" stroke-width="2"><circle cx="322.9" cy="759" r="1.9" fill="#3574f0" stroke="none"/><path d="M322.9 755.1 L322.9 752.1"/><path d="M326.3 757.0 L328.9 755.5"/><path d="M326.3 761.0 L328.9 762.5"/><path d="M322.9 762.9 L322.9 765.9"/><path d="M319.5 761.0 L316.9 762.5"/><path d="M319.5 757.0 L316.9 755.5"/></g>
<g transform="translate(300 786) scale(1)" stroke="#ced0d6" stroke-width="2.4"><path d="M1.2 4.2 Q1.2 1.2 4.2 1.2 H8.6 Q9.8 1.2 10.6 2.1 L13.6 5.3 H23.8 Q26.8 5.3 26.8 8.3 V12 H13.5 V22.8 H4.2 Q1.2 22.8 1.2 19.8 Z" fill="#43454e" stroke="none"/><path d="M13.2 22.8 H4.2 Q1.2 22.8 1.2 19.8 V4.2 Q1.2 1.2 4.2 1.2 H8.6 Q9.8 1.2 10.6 2.1 L13.6 5.3 H23.8 Q26.8 5.3 26.8 8.3 V11.4"/></g><rect x="316" y="801.8" width="14.2" height="2.3" fill="#f2c55c"/><rect x="316" y="805.9" width="14.2" height="2.3" fill="#f2c55c"/><rect x="316" y="809.9" width="14.2" height="2.3" fill="#f2c55c"/>
<g transform="translate(300 834) scale(1)" stroke="#ced0d6" stroke-width="2.4"><path d="M1.2 4.2 Q1.2 1.2 4.2 1.2 H8.6 Q9.8 1.2 10.6 2.1 L13.6 5.3 H23.8 Q26.8 5.3 26.8 8.3 V12 H13.5 V22.8 H4.2 Q1.2 22.8 1.2 19.8 Z" fill="#43454e" stroke="none"/><path d="M13.2 22.8 H4.2 Q1.2 22.8 1.2 19.8 V4.2 Q1.2 1.2 4.2 1.2 H8.6 Q9.8 1.2 10.6 2.1 L13.6 5.3 H23.8 Q26.8 5.3 26.8 8.3 V11.4"/></g><rect x="316" y="849.8" width="14.2" height="2.3" fill="#f2c55c"/><rect x="316" y="853.9" width="14.2" height="2.3" fill="#f2c55c"/><rect x="316" y="857.9" width="14.2" height="2.3" fill="#f2c55c"/>
<g transform="translate(300 882) scale(1)" stroke="#ced0d6" stroke-width="2.4"><path d="M1.2 4.2 Q1.2 1.2 4.2 1.2 H8.6 Q9.8 1.2 10.6 2.1 L13.6 5.3 H23.8 Q26.8 5.3 26.8 8.3 V12 H13.5 V22.8 H4.2 Q1.2 22.8 1.2 19.8 Z" fill="#43454e" stroke="none"/><path d="M13.2 22.8 H4.2 Q1.2 22.8 1.2 19.8 V4.2 Q1.2 1.2 4.2 1.2 H8.6 Q9.8 1.2 10.6 2.1 L13.6 5.3 H23.8 Q26.8 5.3 26.8 8.3 V11.4"/></g><rect x="316" y="897.8" width="14.2" height="2.3" fill="#f2c55c"/><rect x="316" y="901.9" width="14.2" height="2.3" fill="#f2c55c"/><rect x="316" y="905.9" width="14.2" height="2.3" fill="#f2c55c"/>
<path d="M1515.6 189.8 L1528 202.2 M1528 189.8 L1515.6 202.2" stroke="#868a91" stroke-width="2"/>
<path d="M2866.4 253.6 Q2868 251 2869.6 253.6 L2879.6 271 Q2880.8 273.4 2878.2 273.4 H2857.8 Q2855.2 273.4 2856.4 271 Z" fill="#c9a44c" stroke="#c9a44c" stroke-width="1.2"/>
<path d="M2868 258.4 V265.6" stroke="#1e1f22" stroke-width="2.8"/><circle cx="2868" cy="269.6" r="1.7" fill="#1e1f22"/>
<path d="M2915.6 262.4 L2922 268.4 L2935.6 254.6" stroke="#5fad65" stroke-width="3.4"/>
<path d="M2914.6 277 L2918 273.4 L2921.6 276.6 L2925.4 273.4 L2929 276.6 L2932.6 273.4 L2936 276.4" stroke="#5fad65" stroke-width="1.8"/>
<path d="M2981.0 267.5 L2988 260.5 L2995.0 267.5" stroke="#ced0d6" stroke-width="2"/>
<path d="M3023.0 260.5 L3030 267.5 L3037.0 260.5" stroke="#ced0d6" stroke-width="2"/>
<g stroke="#ced0d6" stroke-width="2.2"><path d="M2852.2 1826 Q2852.2 1824 2854.2 1824 H2873.8 Q2875.8 1824 2875.8 1826 V1846.2 L2870.6 1841.6 H2854.2 Q2852.2 1841.6 2852.2 1839.6 Z"/><path d="M2864 1828.6 V1834"/><circle cx="2864" cy="1837.4" r="1.2" fill="#ced0d6" stroke="none"/></g>
<g stroke="#ced0d6" stroke-width="2.3"><rect x="3075" y="1834" width="16.6" height="12.4" rx="2.6"/><path d="M3083.2 1838.4 V1842.2"/><path d="M3087.6 1834 V1831 C3087.6 1827.4 3090 1825.6 3093 1825.6 C3096 1825.6 3098.6 1827.4 3098.6 1831 V1832.6"/></g>
</svg>
<!-- red annotation -->
<div class="a" style="left:1742px;top:79px;width:682px;height:88px;border:8px solid #dc1f0f;border-radius:4px"></div>
</div></div>
</body></html>
